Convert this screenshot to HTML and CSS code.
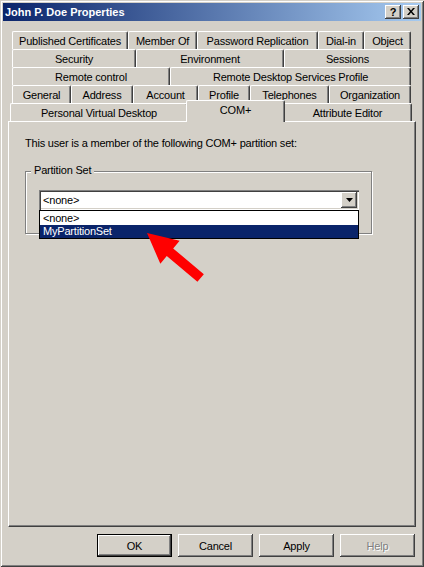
FILE: index.html
```html
<!DOCTYPE html>
<html>
<head>
<meta charset="utf-8">
<link rel="stylesheet" href="styles.css">
</head>
<body>
<div class="window">
  <div class="titlebar">
    <span class="title">John P. Doe Properties</span>
    <div class="tbtns">
      <span class="tbtn q">?</span>
      <span class="tbtn">
        <svg width="8" height="7" viewBox="0 0 8 7"><path d="M0 0h2l2 2.5 2-2.5h2l-3 3.5 3 3.5h-2l-2-2.5-2 2.5h-2l3-3.5z" fill="#000"/></svg>
      </span>
    </div>
  </div>
  <div class="content">
    <div class="tabs">
      <div class="tabrow r1">
        <div class="tab">Published Certificates</div>
        <div class="tab">Member Of</div>
        <div class="tab">Password Replication</div>
        <div class="tab">Dial-in</div>
        <div class="tab">Object</div>
      </div>
      <div class="tabrow r2">
        <div class="tab">Security</div>
        <div class="tab">Environment</div>
        <div class="tab">Sessions</div>
      </div>
      <div class="tabrow r3">
        <div class="tab">Remote control</div>
        <div class="tab">Remote Desktop Services Profile</div>
      </div>
      <div class="tabrow r4">
        <div class="tab">General</div>
        <div class="tab">Address</div>
        <div class="tab">Account</div>
        <div class="tab">Profile</div>
        <div class="tab">Telephones</div>
        <div class="tab">Organization</div>
      </div>
      <div class="tabrow r5">
        <div class="tab">Personal Virtual Desktop</div>
        <div class="tab sel">COM+</div>
        <div class="tab">Attribute Editor</div>
      </div>
    </div>
    <div class="panel">
      <p class="intro">This user is a member of the following COM+ partition set:</p>
      <div class="group">
        <span class="legend">Partition Set</span>
        <div class="combo">
          <div class="combo-field">
            <span class="combo-text">&lt;none&gt;</span>
            <span class="ddbtn"><svg width="7" height="4" viewBox="0 0 7 4"><path d="M0 0h7l-3.5 4z" fill="#000"/></svg></span>
          </div>
          <ul class="droplist">
            <li class="first">&lt;none&gt;</li>
            <li class="hl">MyPartitionSet</li>
          </ul>
        </div>
      </div>
    </div>
    <div class="buttons">
      <span class="btn default">OK</span>
      <span class="btn">Cancel</span>
      <span class="btn">Apply</span>
      <span class="btn disabled">Help</span>
    </div>
  </div>
  <svg class="arrow" width="424" height="567" viewBox="0 0 424 567">
    <polygon points="0,0 30,-15 30,-5 70,-5 70,5 30,5 30,15" fill="#f00" transform="translate(147,233) rotate(40)"/>
  </svg>
</div>
</body>
</html>
```

FILE: styles.css
```css
html, body {
  margin: 0;
  padding: 0;
  background: #d4d0c8;
}
.window {
  position: relative;
  width: 424px;
  height: 567px;
  box-sizing: border-box;
  padding: 3px;
  background: #d4d0c8;
  box-shadow: inset 1px 1px #d4d0c8, inset -1px -1px #404040, inset 2px 2px #fff, inset -2px -2px #808080;
  font-family: "Liberation Sans", Arial, sans-serif;
  font-size: 11px;
  color: #000;
  display: flex;
  flex-direction: column;
}
.titlebar {
  height: 18px;
  background: linear-gradient(to right, #0a246a, #a6caf0);
  display: flex;
  align-items: center;
  justify-content: space-between;
  padding: 0 2px 0 2px;
}
.title {
  color: #fff;
  font-weight: bold;
  font-size: 11px;
}
.tbtns {
  display: flex;
  gap: 2px;
}
.tbtn {
  width: 16px;
  height: 14px;
  box-sizing: border-box;
  background: #d4d0c8;
  box-shadow: inset -1px -1px #404040, inset 1px 1px #fff, inset -2px -2px #808080;
  display: flex;
  align-items: center;
  justify-content: center;
  padding-bottom: 1px;
}
.tbtn.q {
  font-weight: bold;
  font-size: 11px;
  line-height: 14px;
}
.content {
  flex: 1;
  display: flex;
  flex-direction: column;
  padding: 10px 5px 0 5px;
}
.tabs {
  display: flex;
  flex-direction: column;
}
.tabrow {
  display: grid;
  grid-auto-rows: 18px;
}
.r1 { grid-template-columns: 116px 69px 121px 46px 47px; margin-left: 4px; }
.r2 { grid-template-columns: 124px 148px 127px; margin-left: 4px; }
.r3 { grid-template-columns: 158px 241px; margin-left: 4px; }
.r4 { grid-template-columns: 59px 62px 65px 52px 79px 82px; margin-left: 4px; }
.r5 { grid-template-columns: 178px 95px 129px; margin-left: 2px; }
.tab {
  box-sizing: border-box;
  border-top: 1px solid #fff;
  border-left: 1px solid #fff;
  border-right: 1px solid #404040;
  box-shadow: inset -1px 0 #808080;
  border-radius: 2px 2px 0 0;
  background: #d4d0c8;
  display: flex;
  align-items: center;
  justify-content: center;
  white-space: nowrap;
  letter-spacing: -0.2px;
}
.tab.sel {
  position: relative;
  z-index: 1;
  margin: -3px -2px -1px -2px;
  padding-bottom: 4px;
}
.panel {
  height: 406px;
  box-sizing: border-box;
  border-top: 1px solid #fff;
  border-left: 1px solid #fff;
  border-right: 1px solid #404040;
  border-bottom: 1px solid #404040;
  box-shadow: inset -1px -1px #808080;
  padding: 15px 0 0 16px;
}
.intro {
  margin: 0;
  line-height: 13px;
  letter-spacing: -0.2px;
}
.group {
  margin-top: 21px;
  width: 347px;
  height: 63px;
  box-sizing: border-box;
  border: 1px solid #808080;
  box-shadow: inset 1px 1px #fff, 1px 1px #fff;
}
.legend {
  display: table;
  margin: -8px 0 0 5px;
  padding: 0 3px;
  background: #d4d0c8;
  line-height: 13px;
  letter-spacing: -0.2px;
}
.combo {
  position: relative;
  width: 320px;
  margin: 13px 0 0 13px;
}
.combo-field {
  height: 20px;
  box-sizing: border-box;
  background: #fff;
  box-shadow: inset 1px 1px #808080, inset 2px 2px #404040, inset -1px -1px #fff, inset -2px -2px #d4d0c8;
  padding: 2px;
  display: flex;
  align-items: center;
}
.combo-text {
  flex: 1;
  padding-left: 2px;
  letter-spacing: -0.2px;
}
.ddbtn {
  width: 16px;
  height: 16px;
  box-sizing: border-box;
  background: #d4d0c8;
  box-shadow: inset -1px -1px #404040, inset 1px 1px #fff, inset -2px -2px #808080;
  display: flex;
  align-items: center;
  justify-content: center;
  padding-bottom: 1px;
}
.droplist {
  position: absolute;
  top: 100%;
  left: 0;
  width: 320px;
  box-sizing: border-box;
  margin: 0;
  padding: 0;
  list-style: none;
  border: 1px solid #000;
  background: #fff;
}
.droplist li {
  height: 13px;
  line-height: 13px;
  padding-left: 3px;
  letter-spacing: -0.2px;
}
.droplist li.first {
  height: 14px;
  line-height: 15px;
}
.droplist li.hl {
  background: #0a246a;
  color: #fff;
}
.buttons {
  display: flex;
  justify-content: flex-end;
  gap: 6px;
  margin-top: 7px;
  padding-right: 1px;
}
.btn {
  width: 75px;
  height: 23px;
  box-sizing: border-box;
  background: #d4d0c8;
  box-shadow: inset -1px -1px #404040, inset 1px 1px #fff, inset -2px -2px #808080;
  display: flex;
  align-items: center;
  justify-content: center;
  letter-spacing: -0.2px;
}
.btn.default {
  box-shadow: inset 0 0 0 1px #000, inset -2px -2px #404040, inset 2px 2px #fff, inset -3px -3px #808080;
}
.btn.disabled {
  color: #808080;
  text-shadow: 1px 1px #fff;
}
.arrow {
  position: absolute;
  top: 0;
  left: 0;
  pointer-events: none;
}
```
